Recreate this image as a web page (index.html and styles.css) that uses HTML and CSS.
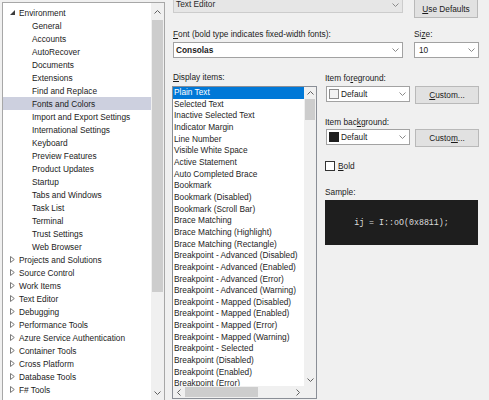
FILE: index.html
```html
<!DOCTYPE html>
<html>
<head>
<meta charset="utf-8">
<link rel="stylesheet" href="styles.css">
</head>
<body>
<div class="dialog">
  <div class="tree">
    <div class="tree-list">
      <div class="row top"><svg class="exp" width="5" height="5" viewBox="0 0 5 5"><polygon points="5,0 5,5 0,5" fill="#3c3c3c"/></svg><span>Environment</span></div>
      <div class="row child">General</div>
      <div class="row child">Accounts</div>
      <div class="row child">AutoRecover</div>
      <div class="row child">Documents</div>
      <div class="row child">Extensions</div>
      <div class="row child">Find and Replace</div>
      <div class="row child sel">Fonts and Colors</div>
      <div class="row child">Import and Export Settings</div>
      <div class="row child">International Settings</div>
      <div class="row child">Keyboard</div>
      <div class="row child">Preview Features</div>
      <div class="row child">Product Updates</div>
      <div class="row child">Startup</div>
      <div class="row child">Tabs and Windows</div>
      <div class="row child">Task List</div>
      <div class="row child">Terminal</div>
      <div class="row child">Trust Settings</div>
      <div class="row child">Web Browser</div>
      <div class="row top"><svg class="col" width="5" height="7" viewBox="0 0 5 7"><polygon points="0.5,0.5 4.3,3.5 0.5,6.5" fill="none" stroke="#7a7a7a" stroke-width="1"/></svg><span>Projects and Solutions</span></div>
      <div class="row top"><svg class="col" width="5" height="7" viewBox="0 0 5 7"><polygon points="0.5,0.5 4.3,3.5 0.5,6.5" fill="none" stroke="#7a7a7a" stroke-width="1"/></svg><span>Source Control</span></div>
      <div class="row top"><svg class="col" width="5" height="7" viewBox="0 0 5 7"><polygon points="0.5,0.5 4.3,3.5 0.5,6.5" fill="none" stroke="#7a7a7a" stroke-width="1"/></svg><span>Work Items</span></div>
      <div class="row top"><svg class="col" width="5" height="7" viewBox="0 0 5 7"><polygon points="0.5,0.5 4.3,3.5 0.5,6.5" fill="none" stroke="#7a7a7a" stroke-width="1"/></svg><span>Text Editor</span></div>
      <div class="row top"><svg class="col" width="5" height="7" viewBox="0 0 5 7"><polygon points="0.5,0.5 4.3,3.5 0.5,6.5" fill="none" stroke="#7a7a7a" stroke-width="1"/></svg><span>Debugging</span></div>
      <div class="row top"><svg class="col" width="5" height="7" viewBox="0 0 5 7"><polygon points="0.5,0.5 4.3,3.5 0.5,6.5" fill="none" stroke="#7a7a7a" stroke-width="1"/></svg><span>Performance Tools</span></div>
      <div class="row top"><svg class="col" width="5" height="7" viewBox="0 0 5 7"><polygon points="0.5,0.5 4.3,3.5 0.5,6.5" fill="none" stroke="#7a7a7a" stroke-width="1"/></svg><span>Azure Service Authentication</span></div>
      <div class="row top"><svg class="col" width="5" height="7" viewBox="0 0 5 7"><polygon points="0.5,0.5 4.3,3.5 0.5,6.5" fill="none" stroke="#7a7a7a" stroke-width="1"/></svg><span>Container Tools</span></div>
      <div class="row top"><svg class="col" width="5" height="7" viewBox="0 0 5 7"><polygon points="0.5,0.5 4.3,3.5 0.5,6.5" fill="none" stroke="#7a7a7a" stroke-width="1"/></svg><span>Cross Platform</span></div>
      <div class="row top"><svg class="col" width="5" height="7" viewBox="0 0 5 7"><polygon points="0.5,0.5 4.3,3.5 0.5,6.5" fill="none" stroke="#7a7a7a" stroke-width="1"/></svg><span>Database Tools</span></div>
      <div class="row top"><svg class="col" width="5" height="7" viewBox="0 0 5 7"><polygon points="0.5,0.5 4.3,3.5 0.5,6.5" fill="none" stroke="#7a7a7a" stroke-width="1"/></svg><span>F# Tools</span></div>
    </div>
    <div class="tree-scroll">
      <div class="sb-btn tall"><svg width="7" height="4" viewBox="0 0 7 4"><polyline points="0.5,3.5 3.5,0.5 6.5,3.5" fill="none" stroke="#606060"/></svg></div>
      <div class="tree-thumb"></div>
      <div class="sb-track"></div>
      <div class="sb-btn tall"><svg width="7" height="4" viewBox="0 0 7 4"><polyline points="0.5,0.5 3.5,3.5 6.5,0.5" fill="none" stroke="#606060"/></svg></div>
    </div>
  </div>

  <div class="right">
    <div class="r1">
      <div class="combo wide disabled"><span class="ctext">Text Editor</span><svg class="dd" width="7" height="4" viewBox="0 0 7 4"><polyline points="0.5,0.5 3.5,3.5 6.5,0.5" fill="none" stroke="#8a8a8a"/></svg></div>
      <div class="btn tallbtn"><span><u>U</u>se Defaults</span></div>
    </div>
    <div class="r2">
      <div class="lbl wide-lbl"><u>F</u>ont (bold type indicates fixed-width fonts):</div>
      <div class="lbl">Si<u>z</u>e:</div>
    </div>
    <div class="r3">
      <div class="combo wide"><span class="ctext bold">Consolas</span><svg class="dd" width="7" height="4" viewBox="0 0 7 4"><polyline points="0.5,0.5 3.5,3.5 6.5,0.5" fill="none" stroke="#8a8a8a"/></svg></div>
      <div class="combo size"><span class="ctext pad4">10</span><svg class="dd" width="7" height="4" viewBox="0 0 7 4"><polyline points="0.5,0.5 3.5,3.5 6.5,0.5" fill="none" stroke="#8a8a8a"/></svg></div>
    </div>
    <div class="r4">
      <div class="items-col">
        <div class="lbl"><u>D</u>isplay items:</div>
        <div class="listbox">
          <div class="lb-items">
            <div class="li sel">Plain Text</div>
            <div class="li">Selected Text</div>
            <div class="li">Inactive Selected Text</div>
            <div class="li">Indicator Margin</div>
            <div class="li">Line Number</div>
            <div class="li">Visible White Space</div>
            <div class="li">Active Statement</div>
            <div class="li">Auto Completed Brace</div>
            <div class="li">Bookmark</div>
            <div class="li">Bookmark (Disabled)</div>
            <div class="li">Bookmark (Scroll Bar)</div>
            <div class="li">Brace Matching</div>
            <div class="li">Brace Matching (Highlight)</div>
            <div class="li">Brace Matching (Rectangle)</div>
            <div class="li">Breakpoint - Advanced (Disabled)</div>
            <div class="li">Breakpoint - Advanced (Enabled)</div>
            <div class="li">Breakpoint - Advanced (Error)</div>
            <div class="li">Breakpoint - Advanced (Warning)</div>
            <div class="li">Breakpoint - Mapped (Disabled)</div>
            <div class="li">Breakpoint - Mapped (Enabled)</div>
            <div class="li">Breakpoint - Mapped (Error)</div>
            <div class="li">Breakpoint - Mapped (Warning)</div>
            <div class="li">Breakpoint - Selected</div>
            <div class="li">Breakpoint (Disabled)</div>
            <div class="li">Breakpoint (Enabled)</div>
            <div class="li">Breakpoint (Error)</div>
          </div>
          <div class="lb-vs">
            <div class="sb-btn sq"><svg width="7" height="4" viewBox="0 0 7 4"><polyline points="0.5,3.5 3.5,0.5 6.5,3.5" fill="none" stroke="#606060"/></svg></div>
            <div class="lb-vthumb"></div>
            <div class="sb-track"></div>
            <div class="sb-btn sq"><svg width="7" height="4" viewBox="0 0 7 4"><polyline points="0.5,0.5 3.5,3.5 6.5,0.5" fill="none" stroke="#606060"/></svg></div>
          </div>
          <div class="lb-hs">
            <div class="sb-btn sq"><svg width="4" height="7" viewBox="0 0 4 7"><polyline points="3.5,0.5 0.5,3.5 3.5,6.5" fill="none" stroke="#606060"/></svg></div>
            <div class="lb-hthumb"></div>
            <div class="sb-track"></div>
            <div class="sb-btn sq"><svg width="4" height="7" viewBox="0 0 4 7"><polyline points="0.5,0.5 3.5,3.5 0.5,6.5" fill="none" stroke="#606060"/></svg></div>
          </div>
          <div class="lb-corner"></div>
        </div>
      </div>
      <div class="side">
        <div class="lbl">Item fo<u>r</u>eground:</div>
        <div class="pair first">
          <div class="combo color"><span class="swatch light"></span><span class="ctext">Default</span><svg class="dd" width="7" height="4" viewBox="0 0 7 4"><polyline points="0.5,0.5 3.5,3.5 6.5,0.5" fill="none" stroke="#8a8a8a"/></svg></div>
          <div class="btn"><span><u>C</u>ustom...</span></div>
        </div>
        <div class="lbl gap12">Item bac<u>k</u>ground:</div>
        <div class="pair second">
          <div class="combo color"><span class="swatch dark"></span><span class="ctext">Default</span><svg class="dd" width="7" height="4" viewBox="0 0 7 4"><polyline points="0.5,0.5 3.5,3.5 6.5,0.5" fill="none" stroke="#8a8a8a"/></svg></div>
          <div class="btn"><span>Custo<u>m</u>...</span></div>
        </div>
        <div class="check"><span class="box"></span><span><u>B</u>old</span></div>
        <div class="lbl sample-lbl">Sample:</div>
        <div class="sample">ij = I::oO(0x8811);</div>
      </div>
    </div>
  </div>
</div>
</body>
</html>
```

FILE: styles.css
```css
html, body {
  margin: 0;
  padding: 0;
}
body {
  width: 489px;
  height: 400px;
  overflow: hidden;
  background: #f0f0f0;
  font-family: "Liberation Sans", Arial, sans-serif;
  font-size: 8.3px;
  color: #1b1b1b;
}
u { text-decoration: underline; text-underline-offset: 1px; }

.dialog {
  display: flex;
  align-items: flex-start;
  height: 400px;
}

/* ---------- tree ---------- */
.tree {
  flex-shrink: 0;
  margin: 2px 0 0 2px;
  width: 163px;
  height: 400px;
  box-sizing: border-box;
  border: 1px solid #a7a7a7;
  background: #fff;
  display: flex;
  overflow: hidden;
}
.tree-list {
  flex: 1;
  padding-top: 3px;
  overflow: hidden;
}
.row {
  height: 13px;
  display: flex;
  align-items: center;
  white-space: nowrap;
}
.row.top { padding-left: 7px; }
.row.top svg { width: 5px; margin-right: 4px; flex-shrink: 0; }
.row.child { padding-left: 29px; }
.row.sel { background: #cdd0df; }

.tree-scroll {
  width: 13px;
  flex-shrink: 0;
  background: #f0f0f0;
  display: flex;
  flex-direction: column;
}
.sb-btn {
  display: flex;
  align-items: center;
  justify-content: center;
  flex-shrink: 0;
}
.sb-btn.tall { height: 17px; }
.tree-scroll .sb-btn.tall:last-child { height: 16px; }
.tree-thumb {
  height: 272px;
  margin: 0 1px;
  background: #cdcdcd;
  flex-shrink: 0;
}
.sb-track { flex: 1; }

/* ---------- right ---------- */
.right {
  flex: 1;
  padding-left: 8px;
  display: flex;
  flex-direction: column;
}
.r1 {
  display: flex;
  align-items: flex-start;
  gap: 11px;
  margin-top: -4px;
}
.combo {
  box-sizing: border-box;
  height: 16px;
  background: #fff;
  border: 1px solid #a2a2a2;
  display: flex;
  align-items: center;
  position: relative;
}
.combo.wide { width: 230px; }
.combo.disabled {
  height: 17px;
  background: #e6e6e6;
  border-color: #cccccc;
  color: #2a2a2a;
  align-items: flex-end;
  padding-bottom: 3px;
}
.combo.disabled .dd { margin-bottom: 2px; }
.ctext {
  flex: 1;
  padding-left: 2px;
  white-space: nowrap;
}
.ctext.bold { font-weight: bold; }
.ctext.pad4 { padding-left: 4px; }
.dd { margin-right: 3px; flex-shrink: 0; }
.combo.size { width: 65px; }

.btn {
  box-sizing: border-box;
  width: 64px;
  height: 18px;
  background: #e1e1e1;
  border: 1px solid #b9b9b9;
  display: flex;
  align-items: center;
  justify-content: center;
  white-space: nowrap;
}
.btn.tallbtn {
  height: 22px;
  padding-top: 3px;
}

.lbl {
  line-height: 12px;
  height: 12px;
  white-space: nowrap;
}
.r2 {
  display: flex;
  margin-top: 10px;
}
.wide-lbl { width: 241px; }
.r3 {
  display: flex;
  gap: 11px;
  margin-top: 2px;
}
.r4 {
  display: flex;
  gap: 8px;
  margin-top: 13px;
}
.items-col {
  margin-left: -1px;
  width: 145px;
  display: flex;
  flex-direction: column;
}
.items-col .lbl { padding-left: 1px; }

.listbox {
  margin-top: 3px;
  box-sizing: border-box;
  width: 145px;
  height: 313px;
  border: 1px solid #8a8e96;
  background: #fff;
  display: grid;
  grid-template-columns: 1fr 12px;
  grid-template-rows: 1fr 12px;
  overflow: hidden;
}
.lb-items {
  overflow: hidden;
  color: #1e1e1e;
}
.li {
  height: 11.67px;
  line-height: 11.67px;
  padding-left: 1px;
  white-space: nowrap;
}
.li.sel {
  background: #0078d7;
  color: #fff;
}
.lb-vs {
  background: #f0f0f0;
  display: flex;
  flex-direction: column;
}
.sb-btn.sq { height: 12px; width: 12px; }
.lb-vthumb {
  height: 21px;
  margin: 0 1px;
  background: #cdcdcd;
  flex-shrink: 0;
}
.lb-hs {
  background: #f0f0f0;
  display: flex;
}
.lb-hthumb {
  width: 73px;
  margin: 1px 0;
  background: #cdcdcd;
  flex-shrink: 0;
}
.lb-corner { background: #f0f0f0; }

/* ---------- side column ---------- */
.side {
  width: 155px;
  margin-top: 1px;
  display: flex;
  flex-direction: column;
}
.pair {
  display: flex;
  gap: 5px;
  align-items: flex-start;
}
.pair.first { margin-top: 2px; }
.pair.second { margin-top: 1px; }
.combo.color {
  margin-left: 1px;
  width: 84px;
}
.swatch {
  box-sizing: border-box;
  width: 10px;
  height: 10px;
  margin-left: 2px;
  flex-shrink: 0;
}
.swatch.light { background: #f3f3f3; border: 1px solid #8c8c8c; }
.swatch.dark { background: #1e1e1e; border: 1px solid #1e1e1e; }
.combo.color .ctext { padding-left: 2px; }
.gap12 { margin-top: 12px; }

.check {
  margin-top: 13px;
  height: 12px;
  display: flex;
  align-items: center;
  gap: 3px;
}
.check .box {
  box-sizing: border-box;
  width: 10px;
  height: 10px;
  background: #fff;
  border: 1px solid #333;
}
.sample-lbl { margin-top: 14px; }
.sample {
  margin-top: 2px;
  width: 153px;
  height: 45px;
  background: #1e1e1e;
  color: #dcdcdc;
  font-family: "Liberation Mono", "DejaVu Sans Mono", monospace;
  font-size: 8.3px;
  display: flex;
  align-items: center;
  justify-content: center;
  white-space: pre;
}
```
